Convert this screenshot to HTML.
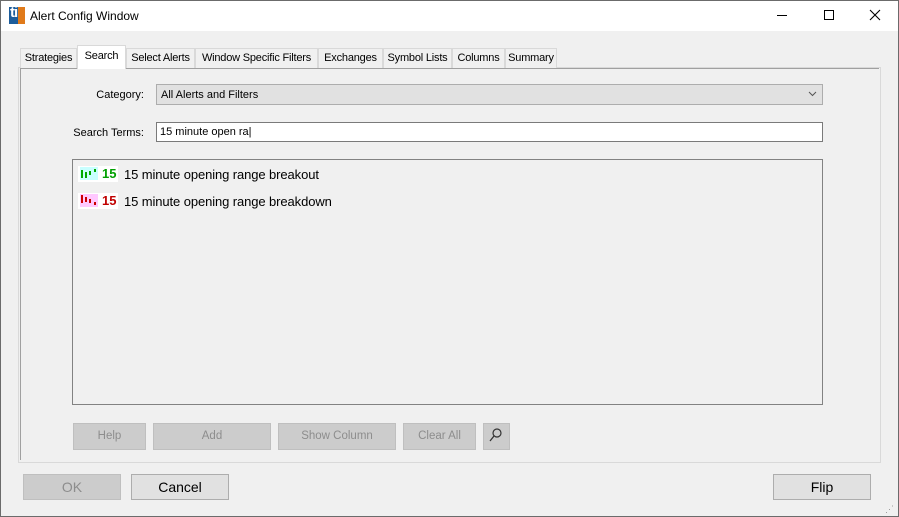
<!DOCTYPE html>
<html><head><style>
*{box-sizing:border-box;margin:0;padding:0}
body{width:899px;height:517px;background:#f0f0f0;font-family:"Liberation Sans",sans-serif;font-size:12px;color:#000;position:relative;overflow:hidden}
.a{position:absolute}
.win{left:0;top:0;width:899px;height:517px;border:1px solid #6b6b6b}
.title{left:1px;top:1px;width:897px;height:30px;background:#fff}
.tab{position:absolute;top:48px;height:20px;border:1px solid #d9d9d9;border-bottom:none;background:#f0f0f0;font-size:11px;text-align:center;line-height:18px;letter-spacing:-0.2px}
.btn{position:absolute;background:#cccccc;border:1px solid #bfbfbf;color:#8d8d8d;text-align:center;font-size:11.5px}
.btn2{position:absolute;background:#e1e1e1;border:1px solid #adadad;text-align:center;font-size:14px;line-height:24px}
</style></head><body>
<div class="a win"></div>
<div class="a title"></div>
<div class="a" style="left:9px;top:7px;width:16px;height:17px;background:#1d5d9b"></div>
<div class="a" style="left:18px;top:7px;width:7px;height:17px;background:#e07a1a"></div>
<div class="a" style="left:10px;top:4px;color:#fff;font-weight:bold;font-size:15px;letter-spacing:-1px">ti</div>
<div class="a" style="left:30px;top:9px;font-size:12px">Alert Config Window</div>
<div class="a" style="left:777px;top:15px;width:10px;height:1px;background:#000"></div>
<div class="a" style="left:824px;top:10px;width:10px;height:10px;border:1px solid #000"></div>
<svg class="a" style="left:869px;top:9px" width="12" height="12"><path d="M1 1L11 11M11 1L1 11" stroke="#000" stroke-width="1.1"/></svg>

<div class="a" style="left:18px;top:67px;width:863px;height:396px;border:1px solid #d9d9d9;background:#f0f0f0"></div>
<div class="a" style="left:20px;top:68px;width:859px;height:2px;border-top:1px solid #a0a0a0;border-left:1px solid #a0a0a0"></div>
<div class="a" style="left:20px;top:68px;width:1px;height:392px;background:#a0a0a0"></div>
<div class="tab" style="left:20px;width:57px">Strategies</div>
<div class="tab" style="left:77px;width:49px;top:45px;height:24px;background:#fff;line-height:21px">Search</div>
<div class="tab" style="left:126px;width:69px">Select Alerts</div>
<div class="tab" style="left:195px;width:123px">Window Specific Filters</div>
<div class="tab" style="left:318px;width:65px">Exchanges</div>
<div class="tab" style="left:383px;width:69px">Symbol Lists</div>
<div class="tab" style="left:452px;width:53px">Columns</div>
<div class="tab" style="left:505px;width:52px">Summary</div>

<div class="a" style="left:60px;width:84px;text-align:right;top:89px;font-size:11px">Category:</div>
<div class="a" style="left:156px;top:84px;width:667px;height:21px;background:#e1e1e1;border:1px solid #adadad;padding:4px 0 0 4px;font-size:11px">All Alerts and Filters</div>
<svg class="a" style="left:808px;top:91px" width="9" height="6"><path d="M1 1L4.5 4.5L8 1" fill="none" stroke="#555"/></svg>
<div class="a" style="left:40px;width:104px;text-align:right;top:127px;font-size:11px">Search Terms:</div>
<div class="a" style="left:156px;top:122px;width:667px;height:20px;background:#fff;border:1px solid #7a7a7a;padding:3px 0 0 3px;font-size:11px">15 minute open ra|</div>

<div class="a" style="left:72px;top:159px;width:751px;height:246px;border:1px solid #828282;background:#f0f0f0"></div>
<div class="a" style="left:78px;top:166px;width:40px;height:16px;background:#fff"></div>
<div class="a" style="left:80px;top:167px;width:18px;height:13px;background:#c8ffff"></div>
<div class="a" style="left:81px;top:170px;width:2px;height:8px;background:#0a0"></div>
<div class="a" style="left:85px;top:172px;width:2px;height:6px;background:#0a0"></div>
<div class="a" style="left:89px;top:171px;width:2px;height:4px;background:#0a0"></div>
<div class="a" style="left:94px;top:169px;width:2px;height:3px;background:#0a0"></div>
<div class="a" style="left:102px;top:166px;color:#00a000;font-weight:bold;font-size:13px">15</div>
<div class="a" style="left:124px;top:167px;font-size:13px;letter-spacing:-0.1px">15 minute opening range breakout</div>
<div class="a" style="left:78px;top:193px;width:40px;height:16px;background:#fff"></div>
<div class="a" style="left:80px;top:194px;width:18px;height:13px;background:#ffc8ff"></div>
<div class="a" style="left:81px;top:195px;width:2px;height:8px;background:#c00"></div>
<div class="a" style="left:85px;top:197px;width:2px;height:5px;background:#c00"></div>
<div class="a" style="left:89px;top:199px;width:2px;height:4px;background:#c00"></div>
<div class="a" style="left:94px;top:202px;width:2px;height:3px;background:#c00"></div>
<div class="a" style="left:102px;top:193px;color:#c00000;font-weight:bold;font-size:13px">15</div>
<div class="a" style="left:124px;top:194px;font-size:13px;letter-spacing:-0.1px">15 minute opening range breakdown</div>

<div class="btn" style="left:73px;top:423px;width:73px;height:27px;line-height:25px">Help</div>
<div class="btn" style="left:153px;top:423px;width:118px;height:27px;line-height:25px">Add</div>
<div class="btn" style="left:278px;top:423px;width:118px;height:27px;line-height:25px">Show Column</div>
<div class="btn" style="left:403px;top:423px;width:73px;height:27px;line-height:25px">Clear All</div>
<div class="btn" style="left:483px;top:423px;width:27px;height:27px"></div>
<svg class="a" style="left:489px;top:427px" width="14" height="16"><circle cx="8" cy="6" r="4" fill="none" stroke="#333" stroke-width="1.2"/><line x1="5" y1="9" x2="1" y2="14" stroke="#333" stroke-width="1.3"/></svg>

<div class="btn" style="left:23px;top:474px;width:98px;height:26px;line-height:24px;font-size:14px">OK</div>
<div class="btn2" style="left:131px;top:474px;width:98px;height:26px">Cancel</div>
<div class="btn2" style="left:773px;top:474px;width:98px;height:26px">Flip</div>
<div class="a" style="left:885px;top:504px;font-size:9px;color:#999">⋰</div>
</body></html>
